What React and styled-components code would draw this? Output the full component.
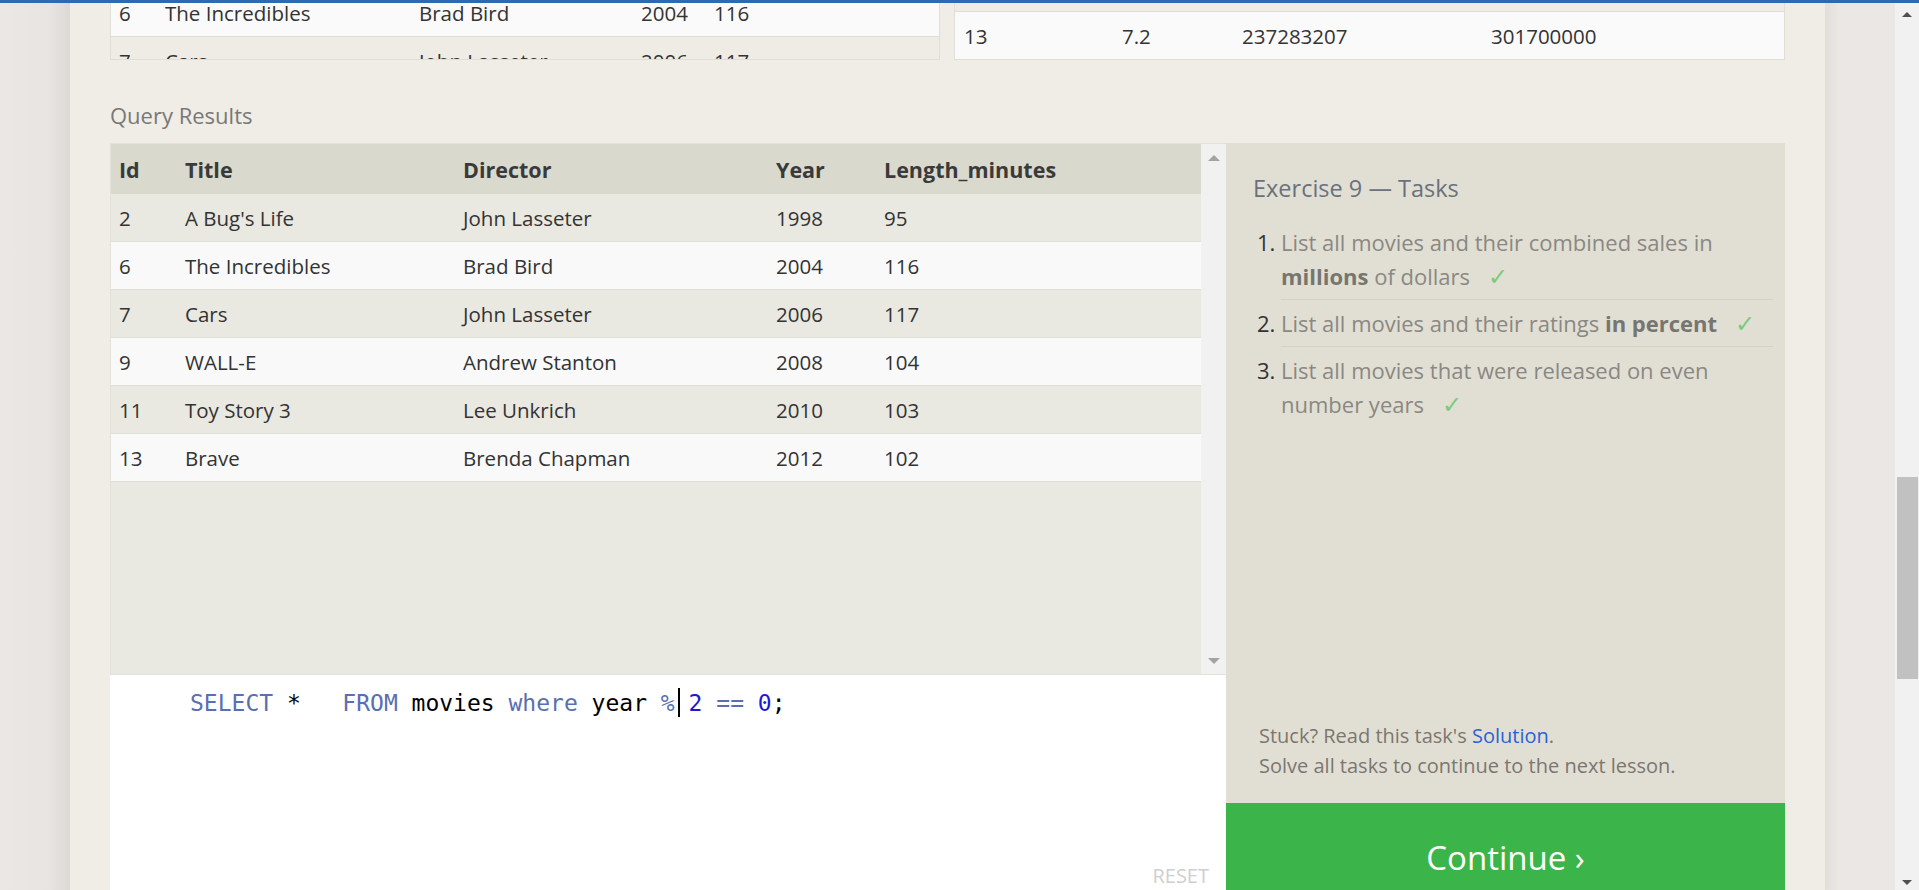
import React from 'react';
import styled, { createGlobalStyle } from 'styled-components';

const GlobalStyle = createGlobalStyle`
  html, body { margin: 0; padding: 0; overflow: hidden; }
  body {
    font-family: "Open Sans", "Noto Sans", sans-serif;
    background: #e9e5e2;
  }
`;

const Screen = styled.div`
  display: flex;
  flex-direction: column;
  height: 890px;
  overflow: hidden;
`;

const TopLine = styled.div`
  height: 3px;
  flex-shrink: 0;
  background: #2d6ab4;
`;

const Frame = styled.div`
  flex: 1;
  display: flex;
  min-height: 0;
`;

const Gutter = styled.div`
  width: 70px;
  flex-shrink: 0;
  background: ${({ side }) => side === 'left'
    ? 'linear-gradient(to right, #ebe7e4 0, #e8e4e1 50px, #dcd8d4 70px)'
    : 'linear-gradient(to right, #e2dedb 0, #ebe7e4 14px, #ebe7e4 100%)'};
`;

const Sheet = styled.main`
  flex: 1;
  min-width: 0;
  background: #f0ede6;
  padding: 0 40px;
  overflow: hidden;
`;

/* scrollbars */
const PageBar = styled.div`
  width: 24px;
  flex-shrink: 0;
  background: #f1f1f1;
  display: flex;
  flex-direction: column;
  align-items: center;
  padding: 9px 0 5px;
  box-sizing: border-box;
`;

const Arrow = styled.div`
  width: 0;
  height: 0;
  flex-shrink: 0;
  border-left: ${({ size }) => size}px solid transparent;
  border-right: ${({ size }) => size}px solid transparent;
  ${({ up, color, size }) => up
    ? `border-bottom: ${size}px solid ${color};`
    : `border-top: ${size}px solid ${color};`}
`;

const Thumb = styled.div`
  width: 21px;
  height: 202px;
  margin-top: 460px;
  background: #c1c1c1;
`;

const Fill = styled.div`
  flex: 1;
`;

/* top, scrolled-away tables */
const TopRow = styled.div`
  display: flex;
  gap: 14px;
  height: 57px;
`;

const Clip = styled.div`
  width: ${({ w }) => w};
  flex: ${({ w }) => (w ? 'none' : '1')};
  overflow: hidden;
  border: 1px solid #e1ded7;
  border-top: none;
  box-sizing: border-box;
`;

const Table = styled.table`
  width: 100%;
  border-collapse: collapse;
  table-layout: fixed;
  font-size: 20.5px;
  color: #333;
  margin-top: ${({ shift }) => shift || 0}px;
`;

const Row = styled.tr`
  background: ${({ tone }) => tone};
  border-bottom: 1px solid #dfddd6;
`;

const Cell = styled.td`
  height: 47px;
  padding: 0 0 0 ${({ pad }) => pad || 8}px;
  white-space: nowrap;
  overflow: hidden;
`;

const HeadCell = styled.th`
  height: 50px;
  padding: 0 0 0 8px;
  text-align: left;
  font-size: 21.5px;
  font-weight: 700;
  color: #3a3a3a;
  background: #dad9ce;
  white-space: nowrap;
`;

/* query results */
const Label = styled.div`
  margin: 41px 0 14px;
  font-size: 22px;
  line-height: 28px;
  color: #787878;
`;

const Workspace = styled.div`
  display: flex;
  align-items: flex-start;
`;

const LeftCol = styled.div`
  width: 1116px;
  flex-shrink: 0;
  display: flex;
  flex-direction: column;
`;

const Results = styled.div`
  height: 532px;
  display: flex;
  background: #e9e8e1;
  border: 1px solid #e3e1da;
  border-right: none;
  box-sizing: border-box;
`;

const ResultsBody = styled.div`
  flex: 1;
  overflow: hidden;
`;

const InnerBar = styled.div`
  width: 25px;
  flex-shrink: 0;
  background: #f1f1f1;
  display: flex;
  flex-direction: column;
  align-items: center;
  justify-content: space-between;
  padding: 11px 0 10px;
  box-sizing: border-box;
`;

const Editor = styled.div`
  height: 240px;
  background: #fff;
  display: flex;
  flex-direction: column;
`;

const Code = styled.pre`
  flex: 1;
  margin: 0;
  padding: 13px 0 0 80px;
  font-family: "DejaVu Sans Mono", "Liberation Mono", monospace;
  font-size: 23px;
  line-height: 30px;
  color: #000;
`;

const Kw = styled.span`
  color: #5a6fb2;
`;

const Num = styled.span`
  color: #1a1ad0;
`;

const Caret = styled.span`
  display: inline-block;
  width: 2px;
  height: 29px;
  margin: 0 -5px 0 3px;
  background: #000;
  vertical-align: -6px;
`;

const EditorFoot = styled.div`
  height: 53px;
  display: flex;
  justify-content: flex-end;
  padding-right: 17px;
  font-size: 20px;
  color: #cfcfcf;
`;

/* tasks */
const TaskPanel = styled.aside`
  flex: 1;
  display: flex;
  flex-direction: column;
  background: #e1dfd4;
  height: 768px;
`;

const TaskBody = styled.div`
  flex: 1;
  padding: 28px 12px 0 27px;
`;

const TaskTitle = styled.div`
  font-size: 23.5px;
  line-height: 35px;
  color: #6a717d;
`;

const TaskList = styled.ol`
  margin: 13px 0 0;
  padding: 0 0 0 28px;
  font-size: 22px;
  line-height: 34px;
  color: #8a8883;
`;

const TaskItem = styled.li`
  padding: 6px 0 5px;
  border-bottom: ${({ last }) => (last ? 'none' : '1px solid #d4d2c7')};
  &::marker { color: #333; }
`;

const Strong = styled.b`
  color: #777570;
`;

const Check = styled.span`
  margin-left: 18px;
  font-family: "DejaVu Sans", sans-serif;
  font-size: 24px;
  color: #7ccb7c;
`;

const Help = styled.div`
  padding: 0 0 22px 33px;
  font-size: 20px;
  line-height: 30px;
  color: #7c7670;
`;

const Link = styled.a`
  color: #2a62d8;
  text-decoration: none;
`;

const Continue = styled.div`
  height: 108px;
  display: flex;
  align-items: center;
  justify-content: center;
  background: #3bb54a;
  color: #fff;
  font-size: 33px;
`;

const movies = [
  [2, "A Bug's Life", 'John Lasseter', 1998, 95],
  [6, 'The Incredibles', 'Brad Bird', 2004, 116],
  [7, 'Cars', 'John Lasseter', 2006, 117],
  [9, 'WALL-E', 'Andrew Stanton', 2008, 104],
  [11, 'Toy Story 3', 'Lee Unkrich', 2010, 103],
  [13, 'Brave', 'Brenda Chapman', 2012, 102],
];

const Cols = ({ widths }) => (
  <colgroup>
    {widths.map((w, i) => <col key={i} style={{ width: w }} />)}
  </colgroup>
);

export default function App() {
  return (
    <Screen>
      <GlobalStyle />
      <TopLine />
      <Frame>
        <Gutter side="left" />
        <Sheet>
          <TopRow>
            <Clip w="830px">
              <Table shift={-14}>
                <Cols widths={[46, 254, 222, 73, 'auto']} />
                <tbody>
                  <Row tone="#fafafa">
                    <Cell>6</Cell><Cell>The Incredibles</Cell><Cell>Brad Bird</Cell><Cell>2004</Cell><Cell>116</Cell>
                  </Row>
                  <Row tone="#eeece5">
                    <Cell>7</Cell><Cell>Cars</Cell><Cell>John Lasseter</Cell><Cell>2006</Cell><Cell>117</Cell>
                  </Row>
                </tbody>
              </Table>
            </Clip>
            <Clip>
              <Table shift={-39}>
                <Cols widths={[158, 120, 249, 'auto']} />
                <tbody>
                  <Row tone="#eeece5">
                    <Cell pad={9}>11</Cell><Cell pad={9}>8.3</Cell><Cell pad={9}>415004880</Cell><Cell pad={9}>648167031</Cell>
                  </Row>
                  <Row tone="#fafafa">
                    <Cell pad={9}>13</Cell><Cell pad={9}>7.2</Cell><Cell pad={9}>237283207</Cell><Cell pad={9}>301700000</Cell>
                  </Row>
                </tbody>
              </Table>
            </Clip>
          </TopRow>

          <Label>Query Results</Label>

          <Workspace>
            <LeftCol>
              <Results>
                <ResultsBody>
                  <Table>
                    <Cols widths={[66, 278, 313, 108, 'auto']} />
                    <thead>
                      <tr>
                        <HeadCell>Id</HeadCell>
                        <HeadCell>Title</HeadCell>
                        <HeadCell>Director</HeadCell>
                        <HeadCell>Year</HeadCell>
                        <HeadCell>Length_minutes</HeadCell>
                      </tr>
                    </thead>
                    <tbody>
                      {movies.map((m, i) => (
                        <Row key={m[0]} tone={i % 2 ? '#f9f9f9' : '#e9e8e1'}>
                          {m.map((v, j) => <Cell key={j}>{v}</Cell>)}
                        </Row>
                      ))}
                    </tbody>
                  </Table>
                </ResultsBody>
                <InnerBar>
                  <Arrow up size={6} color="#a3a3a3" />
                  <Arrow size={6} color="#a3a3a3" />
                </InnerBar>
              </Results>
              <Editor>
                <Code>
                  <Kw>SELECT</Kw> *   <Kw>FROM</Kw> movies <Kw>where</Kw> year <Kw>%</Kw><Caret /> <Num>2</Num> <Kw>==</Kw> <Num>0</Num>;
                </Code>
                <EditorFoot>RESET</EditorFoot>
              </Editor>
            </LeftCol>

            <TaskPanel>
              <TaskBody>
                <TaskTitle>Exercise 9 — Tasks</TaskTitle>
                <TaskList>
                  <TaskItem>
                    List all movies and their combined sales in <Strong>millions</Strong> of dollars<Check>✓</Check>
                  </TaskItem>
                  <TaskItem>
                    List all movies and their ratings <Strong>in percent</Strong><Check>✓</Check>
                  </TaskItem>
                  <TaskItem last>
                    List all movies that were released on even number years<Check>✓</Check>
                  </TaskItem>
                </TaskList>
              </TaskBody>
              <Help>
                Stuck? Read this task's <Link href="#">Solution</Link>.<br />
                Solve all tasks to continue to the next lesson.
              </Help>
              <Continue>Continue ›</Continue>
            </TaskPanel>
          </Workspace>
        </Sheet>
        <Gutter side="right" />
        <PageBar>
          <Arrow up size={5} color="#505050" />
          <Thumb />
          <Fill />
          <Arrow size={5} color="#505050" />
        </PageBar>
      </Frame>
    </Screen>
  );
}
